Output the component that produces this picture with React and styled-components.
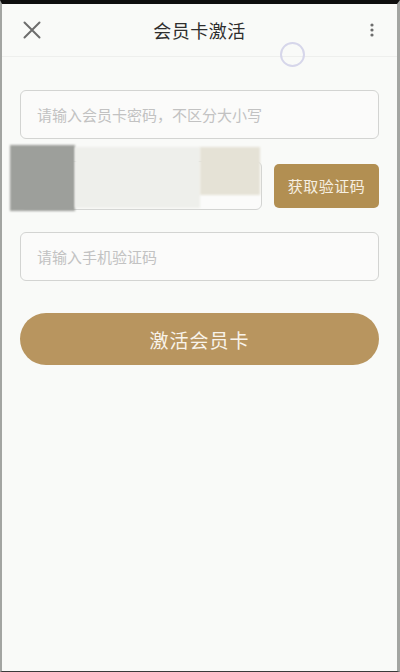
import React from "react";
import styled, { createGlobalStyle } from "styled-components";

const Global = createGlobalStyle`
  html, body { margin: 0; padding: 0; background: #111; }
  body { font-family: "Noto Sans CJK SC", "Noto Sans", sans-serif; }
  * { box-sizing: border-box; }
`;

const Screen = styled.div`
  position: relative;
  width: 400px;
  height: 672px;
  background: #f9faf8;
  border-top: 4px solid #0e0e0e;
  border-left: 2px solid #a3a5a2;
  border-right: 3px solid #a3a5a2;
  border-bottom: 1px solid #3a3a3a;
  display: flex;
  flex-direction: column;
  overflow: hidden;
`;

const Header = styled.header`
  height: 53px;
  flex: none;
  display: grid;
  grid-template-columns: 1fr auto 1fr;
  align-items: center;
  padding: 0 20px;
  border-bottom: 1px solid #eeefed;
`;

const Title = styled.h1`
  margin: 0;
  font-size: 18px;
  font-weight: 400;
  color: #2e2e2e;
  letter-spacing: 0.5px;
`;

const IconButton = styled.span`
  display: flex;
  justify-content: ${(p) => (p.$end ? "flex-end" : "flex-start")};
  padding-right: ${(p) => (p.$end ? "2px" : "0")};
  color: #6d6d6d;
`;

const TouchRing = styled.div`
  position: absolute;
  left: 278px;
  top: 38px;
  width: 25px;
  height: 25px;
  border-radius: 50%;
  border: 2px solid #d6d6ea;
`;

const Form = styled.div`
  display: flex;
  flex-direction: column;
  padding: 33px 18px 0;
`;

const Field = styled.div`
  flex: ${(p) => (p.$grow ? "1 1 auto" : "none")};
  height: 49px;
  border: 1px solid #d3d4d2;
  border-radius: 6px;
  background: #fbfbfa;
  display: flex;
  align-items: center;
  padding-left: 16px;
  font-size: 15px;
  color: #c2c2c2;
  margin-top: ${(p) => p.$gap || 0}px;
`;

const Row = styled.div`
  position: relative;
  flex: none;
  display: flex;
  align-items: center;
  gap: 12px;
  margin-top: 22px;
`;

const CodeButton = styled.button`
  flex: none;
  width: 105px;
  height: 44px;
  border: none;
  border-radius: 5px;
  background: #b28f52;
  color: #f6efe2;
  font-family: inherit;
  font-size: 15px;
  letter-spacing: 0.5px;
  padding: 0;
`;

const Censor = styled.div`
  position: absolute;
  left: ${(p) => p.$l}px;
  top: ${(p) => p.$t}px;
  width: ${(p) => p.$w}px;
  height: ${(p) => p.$h}px;
  background: ${(p) => p.$c};
  filter: blur(1px);
`;

const SubmitButton = styled.button`
  flex: none;
  margin-top: 32px;
  height: 52px;
  border: none;
  border-radius: 26px;
  background: #b8955f;
  color: #f8f3ea;
  font-family: inherit;
  font-size: 19px;
  letter-spacing: 1px;
  padding: 0;
`;

const CloseIcon = () => (
  <svg width="20" height="20" viewBox="0 0 20 20">
    <path d="M2.5 2.5 L17.5 17.5 M17.5 2.5 L2.5 17.5" stroke="currentColor" strokeWidth="2" strokeLinecap="round" />
  </svg>
);

const MoreIcon = () => (
  <svg width="6" height="16" viewBox="0 0 6 16">
    <circle cx="3" cy="3" r="1.6" fill="currentColor" />
    <circle cx="3" cy="8" r="1.6" fill="currentColor" />
    <circle cx="3" cy="13" r="1.6" fill="currentColor" />
  </svg>
);

export default function App() {
  return (
    <>
      <Global />
      <Screen>
        <Header>
          <IconButton><CloseIcon /></IconButton>
          <Title>会员卡激活</Title>
          <IconButton $end><MoreIcon /></IconButton>
        </Header>
        <TouchRing />
        <Form>
          <Field>请输入会员卡密码，不区分大小写</Field>
          <Row>
            <Field $grow />
            <CodeButton>获取验证码</CodeButton>
            <Censor $l={-10} $t={-16} $w={65} $h={66} $c="#9d9f9b" />
            <Censor $l={55} $t={-14} $w={125} $h={61} $c="#eeefeb" />
            <Censor $l={180} $t={-14} $w={60} $h={48} $c="#e5e2d6" />
          </Row>
          <Field $gap={22}>请输入手机验证码</Field>
          <SubmitButton>激活会员卡</SubmitButton>
        </Form>
      </Screen>
    </>
  );
}
